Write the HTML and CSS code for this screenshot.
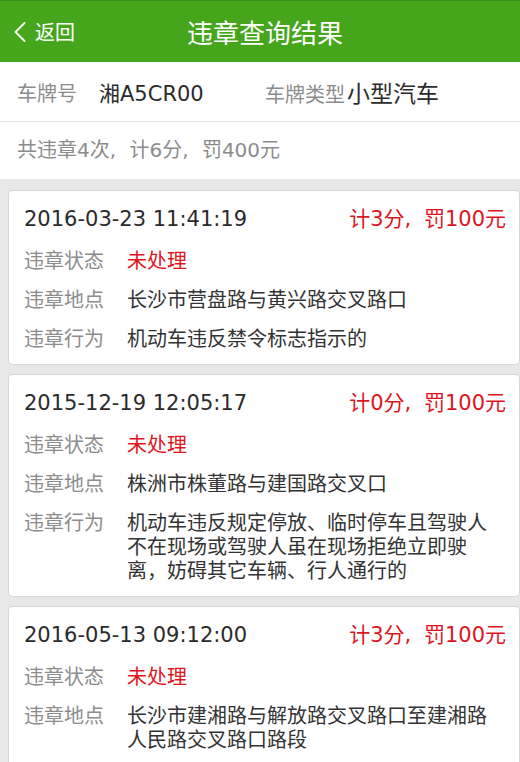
FILE: index.html
```html
<!DOCTYPE html>
<html lang="zh-CN">
<head>
<meta charset="UTF-8" />
<meta name="viewport" content="width=device-width, initial-scale=1" />
<title>违章查询结果</title>
<link rel="stylesheet" href="styles.css">
</head>
<body>

<header class="topbar">
  <a class="back" href="#">
    <svg class="back-icon" width="12" height="20" viewBox="0 0 12 20">
      <polyline points="10.5,1 1.5,10 10.5,19" fill="none" stroke="#fff" stroke-width="1.8" stroke-linecap="round" stroke-linejoin="round" />
    </svg>
    <span>返回</span>
  </a>
  <h1 class="title">违章查询结果</h1>
  <span></span>
</header>

<section class="plate">
  <div class="plate-item plate-no">
    <span class="plate-label">车牌号</span>
    <span class="plate-value">湘A5CR00</span>
  </div>
  <div class="plate-item">
    <span class="plate-label">车牌类型</span>
    <span class="plate-value plate-type">小型汽车</span>
  </div>
</section>

<section class="summary">共违章4次, 计6分, 罚400元</section>

<main class="list">

  <div class="card">
    <div class="card-head">
      <span class="time">2016-03-23 11:41:19</span>
      <span class="fine">计3分, 罚100元</span>
    </div>
    <div class="row"><span class="label">违章状态</span><span class="value status">未处理</span></div>
    <div class="row"><span class="label">违章地点</span><span class="value">长沙市营盘路与黄兴路交叉路口</span></div>
    <div class="row"><span class="label">违章行为</span><span class="value">机动车违反禁令标志指示的</span></div>
  </div>

  <div class="card">
    <div class="card-head">
      <span class="time">2015-12-19 12:05:17</span>
      <span class="fine">计0分, 罚100元</span>
    </div>
    <div class="row"><span class="label">违章状态</span><span class="value status">未处理</span></div>
    <div class="row"><span class="label">违章地点</span><span class="value">株洲市株董路与建国路交叉口</span></div>
    <div class="row"><span class="label">违章行为</span><span class="value">机动车违反规定停放、临时停车且驾驶人不在现场或驾驶人虽在现场拒绝立即驶离，妨碍其它车辆、行人通行的</span></div>
  </div>

  <div class="card">
    <div class="card-head">
      <span class="time">2016-05-13 09:12:00</span>
      <span class="fine">计3分, 罚100元</span>
    </div>
    <div class="row"><span class="label">违章状态</span><span class="value status">未处理</span></div>
    <div class="row"><span class="label">违章地点</span><span class="value">长沙市建湘路与解放路交叉路口至建湘路人民路交叉路口路段</span></div>
  </div>

</main>

</body>
</html>
```

FILE: styles.css
```css
body {
  margin: 0;
  font-family: "DejaVu Sans", "Noto Sans CJK SC", sans-serif;
  background-color: #e8e8e8;
  color: #333;
}

.topbar {
  display: grid;
  grid-template-columns: 1fr auto 1fr;
  align-items: center;
  height: 61px;
  border-top: 1px solid #3a8c18;
  background: #45a61c;
  color: #fff;
}
.back {
  display: flex;
  align-items: center;
  padding-left: 14px;
  color: #fff;
  text-decoration: none;
  font-size: 20px;
}
.back-icon {
  margin-right: 9px;
}
.title {
  margin: 0;
  padding-left: 10px;
  font-size: 26px;
  font-weight: normal;
}

.plate {
  display: flex;
  align-items: center;
  height: 59px;
  padding-left: 17px;
  background: white;
  border-bottom: 1px solid #e2e2e2;
}
.plate-item {
  display: flex;
  align-items: baseline;
}
.plate-no {
  width: 248px;
}
.plate-label {
  font-size: 20px;
  color: #8c8c8c;
}
.plate-value {
  margin-left: 22px;
  font-size: 21px;
  color: #2b2b2b;
}
.plate-type {
  margin-left: 2px;
  font-size: 23px;
}

.summary {
  height: 57px;
  line-height: 57px;
  padding-left: 17px;
  background: white;
  font-size: 20px;
  color: #8c8c8c;
  word-spacing: 7px;
}

.list {
  padding: 11px 0 0 8px;
}
.card {
  margin-bottom: 9px;
  padding: 13px 13px 13px 15px;
  background: white;
  border: 1px solid #d6d6d6;
  border-radius: 4px;
}
.card-head {
  display: flex;
  justify-content: space-between;
  line-height: 30px;
  font-size: 21px;
}
.time {
  color: #2b2b2b;
}
.fine {
  color: #e0151d;
  word-spacing: 6px;
}
.row {
  display: flex;
  margin-top: 15px;
  line-height: 24px;
  font-size: 20px;
}
.label {
  flex: none;
  width: 103px;
  color: #8c8c8c;
}
.value {
  flex: 1;
  color: #333;
}
.status {
  color: #e0151d;
}
```
